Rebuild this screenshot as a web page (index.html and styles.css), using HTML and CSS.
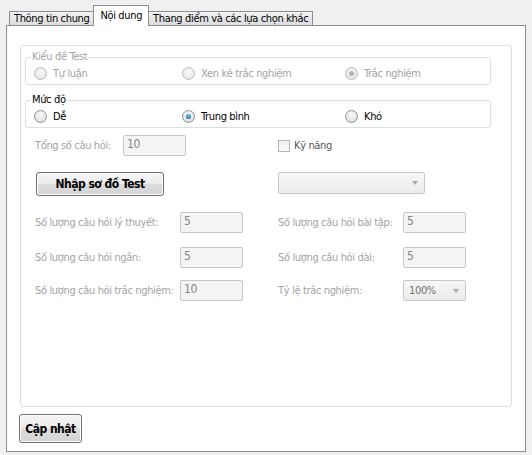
FILE: index.html
```html
<!DOCTYPE html>
<html lang="vi">
<head>
<meta charset="utf-8">
<link rel="stylesheet" href="styles.css">
</head>
<body>
<div class="tabs">
  <div class="tab">Thông tin chung</div>
  <div class="tab active">Nội dung</div>
  <div class="tab">Thang điểm và các lựa chọn khác</div>
</div>
<div class="panel">
  <div class="group">
    <fieldset class="fs fs-disabled">
      <legend>Kiểu đề Test</legend>
      <div class="radios">
        <label class="opt"><span class="radio"></span>Tự luận</label>
        <label class="opt"><span class="radio"></span>Xen kẽ trắc nghiệm</label>
        <label class="opt"><span class="radio checked"></span>Trắc nghiệm</label>
      </div>
    </fieldset>
    <fieldset class="fs fs-level">
      <legend>Mức độ</legend>
      <div class="radios">
        <label class="opt"><span class="radio"></span>Dễ</label>
        <label class="opt"><span class="radio checked"></span>Trung bình</label>
        <label class="opt"><span class="radio"></span>Khó</label>
      </div>
    </fieldset>

    <div class="row row-total">
      <div class="cell">
        <span class="lbl lbl-total">Tổng số câu hỏi:</span>
        <span class="input">10</span>
      </div>
      <div class="cell">
        <span class="check"></span><span class="lbl">Kỹ năng</span>
      </div>
    </div>

    <div class="row row-btn">
      <div class="cell">
        <span class="btn btn-test">Nhập sơ đồ Test</span>
      </div>
      <div class="cell">
        <span class="combo combo-wide"><span class="arrow"></span></span>
      </div>
    </div>

    <div class="row row-a">
      <div class="cell">
        <span class="lbl lbl-left">Số lượng câu hỏi lý thuyết:</span>
        <span class="input">5</span>
      </div>
      <div class="cell">
        <span class="lbl lbl-right">Số lượng câu hỏi bài tập:</span>
        <span class="input">5</span>
      </div>
    </div>

    <div class="row row-b">
      <div class="cell">
        <span class="lbl lbl-left">Số lượng câu hỏi ngắn:</span>
        <span class="input">5</span>
      </div>
      <div class="cell">
        <span class="lbl lbl-right">Số lượng câu hỏi dài:</span>
        <span class="input">5</span>
      </div>
    </div>

    <div class="row row-c">
      <div class="cell">
        <span class="lbl lbl-left">Số lượng câu hỏi trắc nghiệm:</span>
        <span class="input">10</span>
      </div>
      <div class="cell">
        <span class="lbl lbl-right">Tỷ lệ trắc nghiệm:</span>
        <span class="combo combo-small"><span class="val">100%</span><span class="arrow"></span></span>
      </div>
    </div>
  </div>
  <div class="footer">
    <span class="btn btn-update">Cập nhật</span>
  </div>
</div>
</body>
</html>
```

FILE: styles.css
```css
* { box-sizing: border-box; }
html, body { margin: 0; padding: 0; }
body {
  width: 532px;
  height: 455px;
  background: #f0f0f0;
  font-family: "DejaVu Sans Condensed", "DejaVu Sans", sans-serif;
  font-stretch: condensed;
  font-size: 11px;
  letter-spacing: -0.35px;
  color: #000;
  overflow: hidden;
}

/* Tabs */
.tabs {
  display: flex;
  align-items: flex-start;
  height: 25px;
  padding: 5px 0 0 9px;
}
.tab {
  margin-top: 6px;
  height: 14px;
  line-height: 13px;
  padding: 0 4px 0 4px;
  border: 1px solid #898c95;
  border-bottom: none;
  background: linear-gradient(#f3f3f3, #dcdcdc);
  margin-right: -1px;
  white-space: nowrap;
}
.tab.active {
  margin-top: 0;
  height: 21px;
  line-height: 19px;
  padding: 0 6px 0 6px;
  background: #fff;
  position: relative;
  z-index: 1;
}

/* Panel */
.panel {
  margin: 0 6px;
  height: 427px;
  border: 1px solid #898c95;
  background: #fff;
  padding: 19px 13px 0 13px;
}
.group {
  height: 362px;
  border: 1px solid #d6e0e6;
  border-radius: 3px;
  padding: 0;
}

/* Fieldsets */
.fs {
  margin: 5px 20px 0 4px;
  padding: 0;
  border: 1px solid #d6e0e6;
  border-radius: 3px;
  min-width: 0;
}
.fs legend {
  padding: 0 1px;
  margin-left: 5px;
  line-height: 12px;
}
.fs-disabled legend, .fs-disabled .opt { color: #a3a3a3; }
.fs-level { margin-top: 9px; }
.radios {
  display: grid;
  grid-template-columns: 148px 163px 1fr;
  padding-left: 8px;
  height: 21px;
  align-items: center;
}
.opt { display: flex; align-items: center; }
.radio {
  width: 13px;
  height: 13px;
  border-radius: 50%;
  border: 1px solid #bcbcbc;
  background: radial-gradient(circle at 50% 40%, #fbfbfb, #dedede);
  margin-right: 6px;
  position: relative;
  flex: none;
}
.fs-level .radio { border-color: #939393; background: radial-gradient(circle at 50% 35%, #fafafa, #d6d6d6); }
.radio.checked::after {
  content: "";
  position: absolute;
  left: 3px; top: 3px;
  width: 5px; height: 5px;
  border-radius: 50%;
  background: #b5b5b5;
}
.fs-level .radio.checked::after {
  background: radial-gradient(circle at 50% 35%, #6ac6f4, #0a5c9c);
}

/* Rows */
.row {
  display: flex;
  padding-left: 14px;
  align-items: center;
}
.cell {
  display: flex;
  align-items: center;
}
.row .cell:first-child { width: 243px; }
.row-total { margin-top: 7px; height: 21px; }
.row-btn { margin-top: 16px; height: 24px; align-items: flex-start; }
.row-a { margin-top: 16px; height: 21px; }
.row-b { margin-top: 14px; height: 21px; }
.row-c { margin-top: 12px; height: 21px; }

.lbl { color: #a3a3a3; white-space: nowrap; }
.lbl-total { width: 88px; }
.lbl-left { width: 145px; }
.lbl-right { width: 125px; }
.row-total .cell:last-child .lbl { color: #555; margin-left: 4px; }

.input {
  display: block;
  width: 63px;
  height: 21px;
  border: 1px solid #c8c8c8;
  border-radius: 2px;
  background: #f4f4f4;
  color: #858585;
  line-height: 17px;
  padding-left: 3px;
  font-size: 12px;
}
.check {
  width: 12px;
  height: 12px;
  border: 1px solid #b5b5b5;
  background: linear-gradient(#f0f0f0, #fafafa);
  margin-top: 1px;
}

.btn {
  display: flex;
  align-items: center;
  justify-content: center;
  font-weight: bold;
  font-size: 12px;
  letter-spacing: -0.5px;
  border: 1px solid #707070;
  border-radius: 3px;
  background: linear-gradient(#f6f6f6 0%, #ececec 48%, #dcdcdc 52%, #d4d4d4 100%);
  box-shadow: inset 0 0 0 1px #fcfcfc;
  color: #000;
}
.btn-test { width: 128px; height: 24px; margin-left: 1px; }

.combo {
  display: flex;
  align-items: center;
  justify-content: space-between;
  height: 22px;
  border: 1px solid #c8c8c8;
  border-radius: 2px;
  background: linear-gradient(#f6f6f6, #ececec);
  padding: 0 6px 0 5px;
}
.combo-wide { width: 147px; margin-left: 0; justify-content: flex-end; }
.combo-small { width: 63px; height: 21px; }
.combo .val { color: #707070; }
.arrow {
  width: 0; height: 0;
  border-left: 3.5px solid transparent;
  border-right: 3.5px solid transparent;
  border-top: 4px solid #a8a8a8;
}

.footer { padding: 7px 0 0 0; margin-left: -1px; }
.btn-update { width: 63px; height: 29px; }
```
